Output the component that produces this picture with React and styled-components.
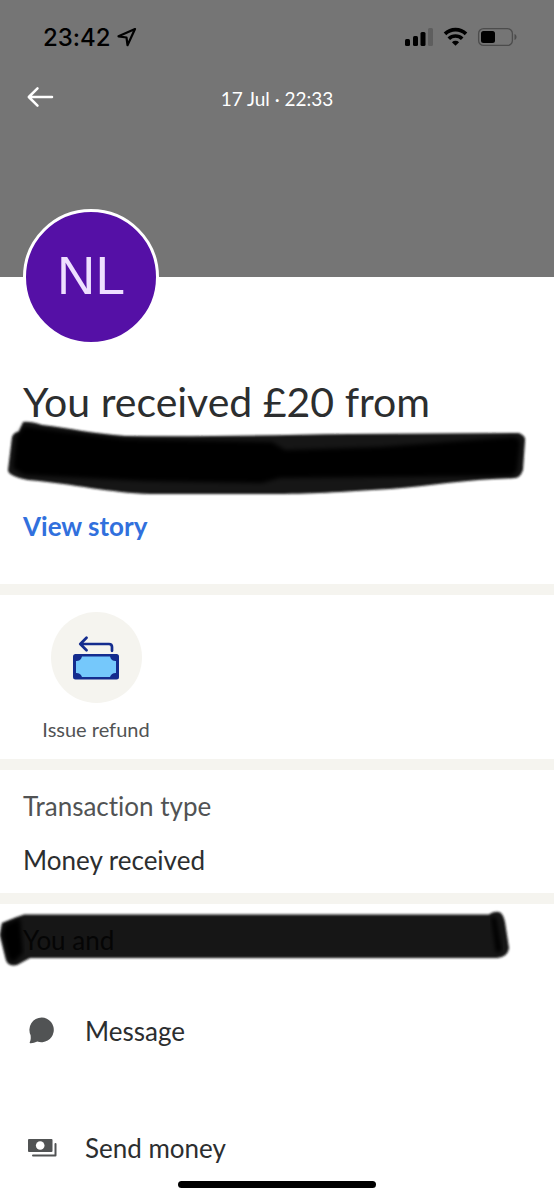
import React from 'react'
import styled, { createGlobalStyle } from 'styled-components'

const GlobalStyle = createGlobalStyle`
    *{
        box-sizing: border-box;
    }
    body{
        margin: 0;
        background-color: #fff;
        font-family: Lato, "Open Sans", sans-serif;
        font-variant-ligatures: none;
        color: #2c2e2f;
    }
`

function StatusIcons() {
    return (
        <svg width="112" height="20" viewBox="0 0 112 20" aria-hidden="true">
            <rect x="0" y="12" width="5" height="7" rx="1.5" />
            <rect x="8" y="9" width="5" height="10" rx="1.5" />
            <rect x="15.5" y="5" width="5" height="14" rx="1.5" />
            <rect x="23" y="1" width="5" height="18" rx="1.5" fill="#5e5e5e" />
            <g fill="none" stroke="#000" strokeWidth="3.7">
                <path d="M40 6.900a15.200 15.200 0 0 1 21 0" />
                <path d="M43.800 11.700a9.600 9.600 0 0 1 13.400 0" />
            </g>
            <path d="M50.500 18.800l-3.600-3.600a5.200 5.200 0 0 1 7.200 0z" />
            <rect x="73.6" y="1.600" width="33.8" height="16.8" rx="5" fill="none" stroke="#4c4c4c" strokeWidth="1.3" />
            <rect x="76" y="4" width="14" height="12" rx="2.5" />
            <path d="M109.500 7v6c1.500-.6 2-1.700 2-3s-.5-2.400-2-3z" fill="#4c4c4c" />
        </svg>
    )
}

function RefundIcon() {
    return (
        <svg width="46" height="44" viewBox="0 0 46 44" aria-hidden="true">
            <path d="M13.500 1.800L7.300 8l6.200 6.200M8 8h28q3 0 3 3v3.800" fill="none" stroke="#142c8e" strokeWidth="2.7" strokeLinecap="round" strokeLinejoin="round" />
            <rect x="0" y="18" width="46" height="25.5" rx="2.5" fill="#142c8e" />
            <path d="M9 20.500h28a6 6 0 0 0 6 4.500v12a6 6 0 0 0-6 4h-28a6 6 0 0 0-6-4v-12a6 6 0 0 0 6-4.500z" fill="#75c8fb" />
        </svg>
    )
}

function App() {
    return (
        <Page>
            <GlobalStyle />
            <Header>
                <StatusBar>
                    <Clock>
                        23:42
                        <svg width="20" height="20" viewBox="0 0 20 20" aria-hidden="true">
                            <path d="M18 2L1.500 9.300l8 1.200 1 7.700z" fill="none" stroke="#000" strokeWidth="2.2" strokeLinejoin="round" />
                        </svg>
                    </Clock>
                    <StatusIcons />
                </StatusBar>
                <NavBar>
                    <BackButton aria-label="Back">
                        <svg width="28" height="20" viewBox="-1 1 28 20" overflow="visible" aria-hidden="true">
                            <path d="M10.500 1.400L1.800 10l8.700 8.600M2 10h23" fill="none" stroke="#fff" strokeWidth="2.5" strokeLinecap="round" strokeLinejoin="round" />
                        </svg>
                    </BackButton>
                    <DateText>17 Jul · 22:33</DateText>
                </NavBar>
            </Header>
            <Summary>
                <Avatar>NL</Avatar>
                <Title>You received £20 from</Title>
                <NameLine>
                    <Marker width="554" height="80" viewBox="0 418 554 80" aria-hidden="true">
                        <defs>
                            <filter id="soft" x="-5%" y="-20%" width="110%" height="140%">
                                <feGaussianBlur stdDeviation="1" />
                            </filter>
                            <filter id="softer" x="-5%" y="-20%" width="110%" height="140%">
                                <feGaussianBlur stdDeviation="2" />
                            </filter>
                        </defs>
                        <path filter="url(#soft)" fill="#141414" d="M23 422Q30 421 42 425C70 428 92 434 125 436C200 437 270 435 350 434L519 433Q526 436 525 441L523 470Q520 478 515 478C470 479 430 486 390 489C340 492 310 494 270 494H150C110 493 75 484 28 480Q8 476 8 470L12 437Q14 432 19 432Z" />
                        <path filter="url(#softer)" d="M24 426L60 431L125 439L272 442L285 450L380 447L513 437Q521 437 520 445L517 472L511 476L280 478L262 483L145 481L24 475L13 468L16 437Z" />
                    </Marker>
                </NameLine>
                <StoryLink href="#">View story</StoryLink>
            </Summary>
            <Actions>
                <ActionButton>
                    <ActionCircle>
                        <RefundIcon />
                    </ActionCircle>
                    Issue refund
                </ActionButton>
            </Actions>
            <Details>
                <dt>Transaction type</dt>
                <dd>Money received</dd>
            </Details>
            <People>
                <PeopleTitle>
                    <Marker width="554" height="60" viewBox="0 908 554 60" aria-hidden="true">
                        <path filter="url(#soft)" fill="#141414" d="M2 923L24 914.500L489 914.500Q493 911 499 912Q503 913 505 922L509 948Q508 957 497 958H30L17 965Q8 967 6 960L0 935Z" />
                        <path filter="url(#softer)" d="M4 925L20 918L23 953L15 961Q10 963 8 957L2 935Z" />
                        <path filter="url(#softer)" d="M491 917l5 0 6 34-6 2z" />
                    </Marker>
                    <span>You and</span>
                </PeopleTitle>
                <List>
                    <li>
                        <ListButton>
                            <svg width="30" height="28" viewBox="0 0 30 28" aria-hidden="true">
                                <path d="M14.700 0.500a12.400 12.400 0 1 1-4.400 24.100Q6.500 26.500 3.200 26.300Q2.400 26 2.800 25C4 22.500 3.800 20.500 3.600 18.200A12.400 12.400 0 0 1 14.700.5z" fill="#515354" />
                            </svg>
                            Message
                        </ListButton>
                    </li>
                    <li>
                        <ListButton>
                            <svg width="30" height="28" viewBox="0 0 30 28" aria-hidden="true">
                                <rect x="1" y="5" width="24.5" height="13" rx="1" fill="#515354" />
                                <circle cx="13.2" cy="11.5" r="4.3" fill="#fff" />
                                <path d="M6 21.500h22.500V10" fill="none" stroke="#515354" strokeWidth="2" strokeLinejoin="round" strokeLinecap="round" />
                            </svg>
                            Send money
                        </ListButton>
                    </li>
                </List>
            </People>
            <HomeBar />
        </Page>
    )
}

export default App

const Page = styled.main`
    min-height: 100vh;
`
const Header = styled.header`
    height: 277px;
    background-color: #757575;
`
const StatusBar = styled.div`
    display: flex;
    align-items: center;
    justify-content: space-between;
    height: 74px;
    padding: 0px 37px 0px 43px;
    color: #000;
`
const Clock = styled.div`
    display: flex;
    align-items: center;
    gap: 6px;
    font-family: Inter, sans-serif;
    font-size: 24px;
    font-weight: 500;
`
const NavBar = styled.nav`
    display: grid;
    grid-template-columns: 28px 1fr 28px;
    align-items: center;
    height: 48px;
    padding: 0px 26px;
`
const BackButton = styled.button`
    display: flex;
    padding: 0;
    border: 0;
    background: none;
    cursor: pointer;
`
const DateText = styled.span`
    color: #fff;
    font-size: 19px;
    text-align: center;
`
const Summary = styled.section`
    padding: 0px 23px 44px;
`
const Avatar = styled.div`
    display: flex;
    align-items: center;
    justify-content: center;
    width: 136px;
    height: 136px;
    margin: -68px 0px 33px;
    padding-bottom: 3px;
    border: 3px solid #fff;
    border-radius: 50%;
    background-color: #5510a6;
    color: #eedfff;
    font-family: "Liberation Sans", sans-serif;
    font-size: 53px;
`
const Title = styled.h1`
    margin: 0;
    font-size: 41px;
    font-weight: 400;
    line-height: 48px;
`
const NameLine = styled.div`
    position: relative;
    height: 48px;
    margin-bottom: 38px;
`
const Marker = styled.svg`
    position: absolute;
    top: -8px;
    left: -23px;
`
const StoryLink = styled.a`
    display: block;
    color: #3170dd;
    font-size: 26px;
    font-weight: 700;
    line-height: 28px;
    text-decoration: none;
`
const Actions = styled.section`
    padding: 17px 23px 16px;
    border-top: 11px solid #f5f4ef;
`
const ActionButton = styled.button`
    display: flex;
    flex-direction: column;
    align-items: center;
    gap: 12px;
    width: 146px;
    padding: 0;
    border: 0;
    background: none;
    color: #515354;
    font: inherit;
    font-size: 20px;
    line-height: 28px;
    cursor: pointer;
`
const ActionCircle = styled.span`
    display: flex;
    align-items: center;
    justify-content: center;
    width: 91px;
    height: 91px;
    border-radius: 50%;
    background-color: #f5f4ef;
`
const Details = styled.dl`
    margin: 0;
    padding: 20px 23px 17px;
    border-top: 11px solid #f5f4ef;
    font-size: 26px;
    line-height: 32px;
    dt{
        margin-bottom: 22px;
        color: #515354;
    }
    dd{
        margin: 0;
    }
`
const People = styled.section`
    padding: 20px 23px 24px;
    border-top: 11px solid #f5f4ef;
`
const PeopleTitle = styled.h2`
    position: relative;
    margin: 0px 0px 47px;
    font-size: 26px;
    font-weight: 400;
    line-height: 32px;
    svg{
        top: -16px;
    }
    span{
        position: relative;
        color: #050505;
    }
`
const List = styled.ul`
    display: flex;
    flex-direction: column;
    gap: 61px;
    margin: 0;
    padding: 0;
    list-style-type: none;
`
const ListButton = styled.button`
    display: flex;
    align-items: center;
    gap: 28px;
    width: 100%;
    height: 56px;
    padding: 0px 4px;
    border: 0;
    background: none;
    color: #2c2e2f;
    font: inherit;
    font-size: 26px;
    cursor: pointer;
`
const HomeBar = styled.div`
    position: fixed;
    bottom: 12px;
    left: 50%;
    width: 198px;
    height: 7px;
    border-radius: 4px;
    background-color: #000;
    transform: translateX(-50%);
`
